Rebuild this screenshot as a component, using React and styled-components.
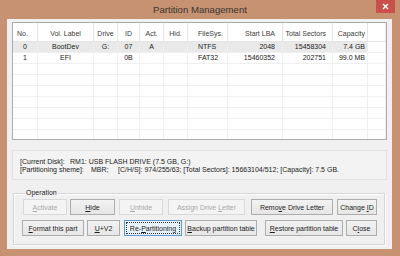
import React from "react";
import styled, { createGlobalStyle } from "styled-components";

const Global = createGlobalStyle`
  html, body { margin: 0; padding: 0; background: #c79271; }
  * { box-sizing: border-box; }
`;

const Window = styled.div`
  width: 400px;
  height: 256px;
  background: #c79271;
  display: flex;
  flex-direction: column;
  font-family: "Liberation Sans", Arial, sans-serif;
  color: #1e1e1e;
  overflow: hidden;
`;

const TitleBar = styled.div`
  height: 19px;
  flex: none;
  display: grid;
  grid-template-columns: 1fr auto 1fr;
  align-items: start;
`;

const Title = styled.div`
  grid-column: 2;
  font-size: 9.6px;
  line-height: 20px;
  color: #3a3530;
`;

const CloseBtn = styled.div`
  grid-column: 3;
  justify-self: end;
  margin-right: 5px;
  width: 19px;
  height: 13px;
  background: #c9504b;
  display: flex;
  align-items: center;
  justify-content: center;
`;

const Client = styled.div`
  flex: 1;
  margin: 0 8px 7px 7px;
  background: #f0f0f0;
  padding: 3px 5px 0 5px;
  display: flex;
  flex-direction: column;
`;

const ListBox = styled.div`
  height: 118px;
  border: 1px solid #acacac;
  background: #fff;
  overflow: hidden;
  display: grid;
  grid-template-columns: 25px 56px 24px 22px 24px 24px 40px 55px 50px 35px 1fr;
  grid-auto-rows: 11px;
  grid-template-rows: 19px;
  font-size: 7px;
`;

const HeadCell = styled.div`
  display: flex;
  align-items: flex-end;
  justify-content: ${(p) => p.$align || "center"};
  padding: 0 ${(p) => p.$pr || 0}px 3px ${(p) => p.$pl || 0}px;
  border-right: 1px solid #e5e5e5;
  border-bottom: 1px solid #e5e5e5;
  color: #3b3b3b;
  white-space: nowrap;
  line-height: 8px;
`;

const Cell = styled.div`
  display: flex;
  align-items: center;
  justify-content: ${(p) => p.$align || "center"};
  padding: 0 ${(p) => p.$pr || 0}px 0 ${(p) => p.$pl || 0}px;
  border-right: 1px solid #efefef;
  border-bottom: 1px solid #efefef;
  background: ${(p) => (p.$sel ? "#e9e9e9" : "transparent")};
  color: #222;
  white-space: nowrap;
  line-height: 8px;
`;

const InfoBox = styled.div`
  margin-top: 10px;
  height: 30px;
  border: 1px solid #e2e2e2;
  background: #f3f3f3;
  padding: 7px 7px 0 7px;
  font-size: 7px;
  line-height: 8px;
  color: #222;
`;

const InfoLine = styled.div`
  display: flex;
  white-space: pre;
`;

const Span = styled.span`
  display: inline-block;
  width: ${(p) => (p.$w ? `${p.$w}px` : "auto")};
`;

const Group = styled.fieldset`
  margin: 9px 2px 0 1px;
  padding: 2px 0 0 9px;
  height: 56px;
  border: 1px solid #d5d5d5;
  box-shadow: inset 1px 1px 0 #fff, 1px 1px 0 #fff;
  display: flex;
  flex-direction: column;
  gap: 5px;
`;

const Legend = styled.legend`
  font-size: 7px;
  line-height: 8px;
  padding: 0 1px;
  margin-left: 2px;
  color: #222;
`;

const BtnRow = styled.div`
  display: flex;
  align-items: center;
`;

const Button = styled.div`
  width: ${(p) => p.$w}px;
  height: 16px;
  margin-left: ${(p) => p.$ml || 0}px;
  flex: none;
  display: flex;
  align-items: center;
  justify-content: center;
  font-size: 7px;
  white-space: pre;
  border: 1px solid ${(p) => (p.$disabled ? "#d9d9d9" : p.$focus ? "#5b9bd5" : "#adadad")};
  background: ${(p) =>
    p.$disabled ? "#f4f4f4" : p.$focus ? "linear-gradient(#eef5fb, #e3eef8)" : "linear-gradient(#f2f2f2, #e6e6e6)"};
  color: ${(p) => (p.$disabled ? "#a8a8a8" : "#1e1e1e")};
  outline: ${(p) => (p.$focus ? "1px dotted #333" : "none")};
  outline-offset: -3px;
`;

const BtnText = styled.span`
  white-space: pre;
  u { text-decoration: underline; }
`;

const cols = [
  { h: "No.", a: "center", ha: "flex-start", hpl: 4 },
  { h: "Vol. Label", a: "center" },
  { h: "Drive", a: "center" },
  { h: "ID", a: "center" },
  { h: "Act.", a: "center" },
  { h: "Hid.", a: "center" },
  { h: "FileSys.", a: "flex-start", pl: 10 },
  { h: "Start LBA", a: "flex-end", pr: 7 },
  { h: "Total Sectors", a: "flex-end", pr: 6 },
  { h: "Capacity", a: "flex-end", pr: 2 },
  { h: "", a: "center" },
];

const rows = [
  ["0", "BootDev", "G:", "07", "A", "", "NTFS", "2048", "15458304", "7.4 GB", ""],
  ["1", "EFI", "", "0B", "", "", "FAT32", "15460352", "202751", "99.0 MB", ""],
];

const emptyRows = 8;

const Btn = ({ children, ...rest }) => (
  <Button {...rest}>
    <BtnText>{children}</BtnText>
  </Button>
);

export default function App() {
  return (
    <>
      <Global />
      <Window>
        <TitleBar>
          <Title>Partition Management</Title>
          <CloseBtn>
            <svg width="7" height="7" viewBox="0 0 7 7">
              <path d="M1 1L6 6M6 1L1 6" stroke="#fff" strokeWidth="1.4" />
            </svg>
          </CloseBtn>
        </TitleBar>
        <Client>
          <ListBox>
            {cols.map((c, i) => (
              <HeadCell key={"h" + i} $align={c.ha || c.a} $pl={c.hpl ?? c.pl} $pr={c.pr}>
                {c.h}
              </HeadCell>
            ))}
            {rows.map((r, ri) =>
              r.map((v, ci) => (
                <Cell
                  key={ri + "-" + ci}
                  $align={cols[ci].a}
                  $pl={cols[ci].pl}
                  $pr={cols[ci].pr}
                  $sel={ri === 0 && ci < 10}
                >
                  {v}
                </Cell>
              ))
            )}
            {Array.from({ length: emptyRows }).map((_, ri) =>
              cols.map((c, ci) => <Cell key={"e" + ri + "-" + ci} />)
            )}
          </ListBox>
          <InfoBox>
            <InfoLine>
              <Span $w={50}>[Current Disk]:</Span>
              <Span>RM1: USB FLASH DRIVE (7.5 GB, G:)</Span>
            </InfoLine>
            <InfoLine>
              <Span $w={71}>[Partitioning sheme]:</Span>
              <Span $w={27}>MBR;</Span>
              <Span>[C/H/S]: 974/255/63; [Total Sectors]: 15663104/512; [Capacity]: 7.5 GB.</Span>
            </InfoLine>
          </InfoBox>
          <Group>
            <Legend>Operation</Legend>
            <BtnRow>
              <Btn $w={44} $disabled>
                <u>A</u>ctivate
              </Btn>
              <Btn $w={45} $ml={3}>
                <u>H</u>ide
              </Btn>
              <Btn $w={44} $ml={4} $disabled>
                <u>U</u>nhide
              </Btn>
              <Btn $w={77} $ml={5} $disabled>
                {"Assign Drive "}<u>L</u>etter
              </Btn>
              <Btn $w={82} $ml={6}>
                Remo<u>v</u>e Drive Letter
              </Btn>
              <Btn $w={40} $ml={4}>
                {"Change "}<u>I</u>D
              </Btn>
            </BtnRow>
            <BtnRow>
              <Btn $w={62} $ml={-1}>
                <u>F</u>ormat this part
              </Btn>
              <Btn $w={33} $ml={3}>
                <u>U</u>+V2
              </Btn>
              <Btn $w={58} $ml={4} $focus>
                Re-<u>P</u>artitioning
              </Btn>
              <Btn $w={72} $ml={3}>
                <u>B</u>ackup partition table
              </Btn>
              <Btn $w={78} $ml={8}>
                <u>R</u>estore partition table
              </Btn>
              <Btn $w={31} $ml={3}>
                C<u>l</u>ose
              </Btn>
            </BtnRow>
          </Group>
        </Client>
      </Window>
    </>
  );
}
